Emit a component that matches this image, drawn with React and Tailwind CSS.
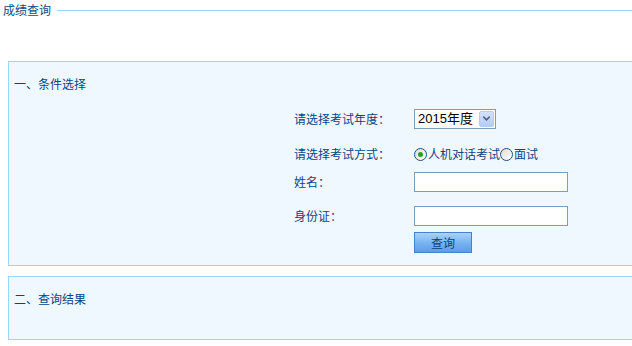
import { ChevronDown } from 'lucide-react';

const FONT = { fontFamily: '"Noto Sans CJK SC", "Liberation Sans", sans-serif' };

function Radio({ checked }) {
  return (
    <span className="flex h-[13px] w-[13px] shrink-0 items-center justify-center rounded-full border border-[#1c5180] bg-gradient-to-br from-[#dcdcd6] to-white">
      {checked && <span className="h-[5px] w-[5px] rounded-full bg-[#27a11a]" />}
    </span>
  );
}

function Row({ label, className, children }) {
  return (
    <div className={`flex items-center ${className}`}>
      <div className="w-[120px] shrink-0 text-[12px] leading-[16px] text-[#0d4383]">{label}</div>
      {children}
    </div>
  );
}

export default function App() {
  return (
    <div className="min-h-[346px] w-[632px] overflow-hidden bg-white" style={FONT}>
      {/* fieldset-style title */}
      <div className="flex items-center pl-[3px] pt-[2px]">
        <span className="text-[12px] leading-[16px] text-[#0b4a8c]">成绩查询</span>
        <div className="ml-[6px] h-px flex-1 bg-[#99d6ff]" />
      </div>

      <div className="ml-[8px] mt-[43px] border-y border-l border-[#99d6ff] bg-[#f0f8ff] pb-[12px] pt-[14px]">
        <div className="pl-[5px] text-[12px] leading-[16px] text-[#0d4383]">一、条件选择</div>

        <div className="mt-[17px] pl-[285px]">
          <Row label="请选择考试年度：" className="h-[19px]">
            <div className="flex h-[20px] w-[82px] items-center border border-[#7f9db9] bg-white">
              <span className="flex-1 pl-[3px] text-[13px] leading-[16px] text-black" style={{ fontFamily: '"Liberation Sans", "Noto Sans CJK SC", sans-serif' }}>2015年度</span>
              <span className="mr-px flex h-[16px] w-[15px] items-center justify-center rounded-[2px] border border-[#b8cbf3] bg-gradient-to-b from-[#d4e1fc] to-[#b6cbf6]">
                <ChevronDown size={11} strokeWidth={3.2} className="text-[#4d6185]" />
              </span>
            </div>
          </Row>

          <Row label="请选择考试方式：" className="mt-[18px] h-[16px]">
            <div className="flex items-center text-[12px] leading-[16px] text-[#0d4383]">
              <Radio checked />
              <span className="ml-px">人机对话考试</span>
              <Radio />
              <span className="ml-px">面试</span>
            </div>
          </Row>

          <Row label="姓名：" className="mt-[10px] h-[20px]">
            <div className="h-[20px] w-[154px] border border-[#7f9db9] bg-white" />
          </Row>

          <Row label="身份证：" className="mt-[14px] h-[20px]">
            <div className="h-[20px] w-[154px] border border-[#7f9db9] bg-white" />
          </Row>

          <div className="mt-[6px] flex pl-[120px]">
            <button className="h-[21px] w-[58px] border border-[#4a80c8] bg-gradient-to-b from-[#a9d2fb] via-[#79b5f2] to-[#5c9be8] text-[12px] leading-[16px] text-[#0d3f7e]">
              查询
            </button>
          </div>
        </div>
      </div>

      <div className="ml-[8px] mt-[10px] h-[64px] border-y border-l border-[#99d6ff] bg-[#f0f8ff] pt-[14px]">
        <div className="pl-[5px] text-[12px] leading-[16px] text-[#0d4383]">二、查询结果</div>
      </div>
    </div>
  );
}
